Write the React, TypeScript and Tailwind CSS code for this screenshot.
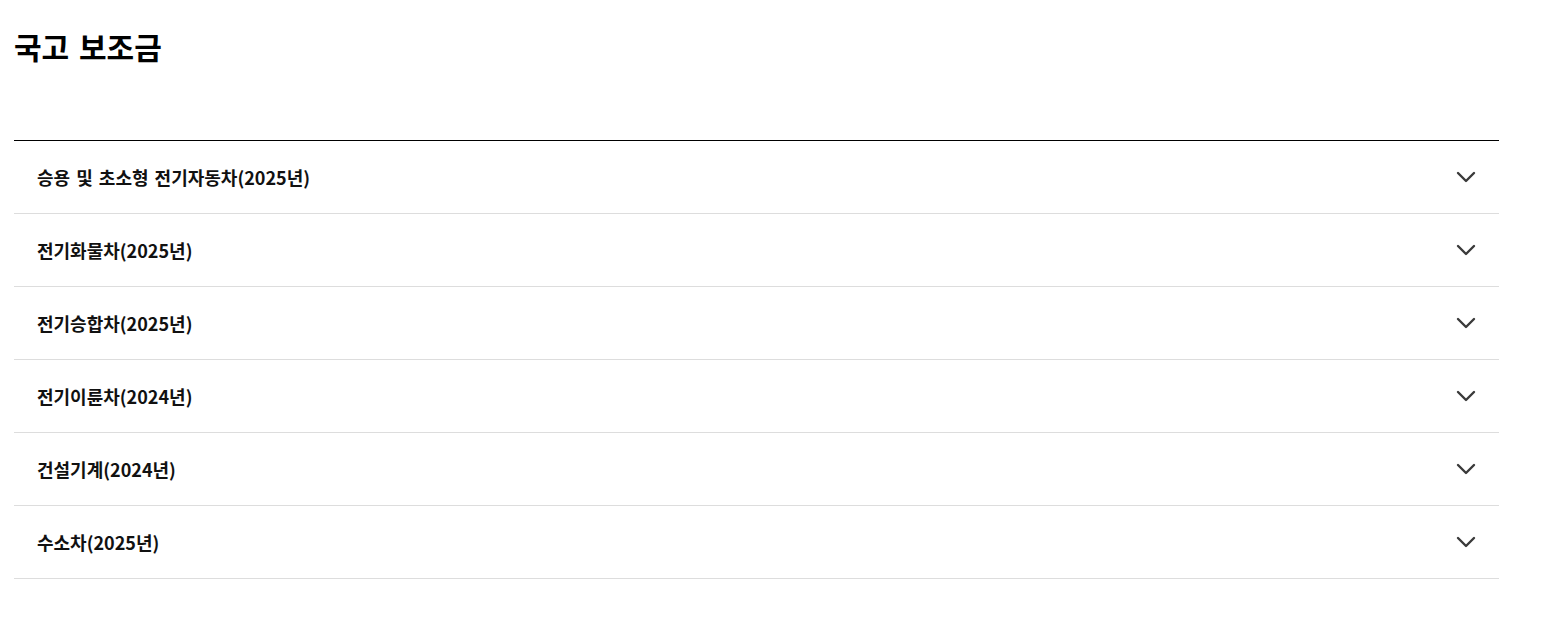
import React from "react";

const items = [
  "승용 및 초소형 전기자동차(2025년)",
  "전기화물차(2025년)",
  "전기승합차(2025년)",
  "전기이륜차(2024년)",
  "건설기계(2024년)",
  "수소차(2025년)",
];

function Chevron() {
  return (
    <svg width="20" height="12" viewBox="0 0 20 12" fill="none">
      <path d="M2 2 L10 10 L18 2" stroke="#3a3a3a" strokeWidth="2.4" strokeLinecap="round" strokeLinejoin="round" />
    </svg>
  );
}

export default function App() {
  return (
    <div className="bg-white min-h-[625px] px-[14px] w-[1513px]">
      <div className="font-['Noto_Sans_CJK_KR','Noto_Sans',sans-serif] text-black">
        <h2 className="pt-[26px] text-[30px] leading-[40px] font-bold [word-spacing:3px]">국고 보조금</h2>
        <div className="mt-[74px] border-t border-black">
          {items.map((t) => (
            <div
              key={t}
              className="flex items-center justify-between h-[73px] border-b border-[#dddddd] pl-[23px] pr-[23px]"
            >
              <span className="text-[18px] font-bold text-[#111] [word-spacing:2px]">{t}</span>
              <Chevron />
            </div>
          ))}
        </div>
      </div>
    </div>
  );
}
